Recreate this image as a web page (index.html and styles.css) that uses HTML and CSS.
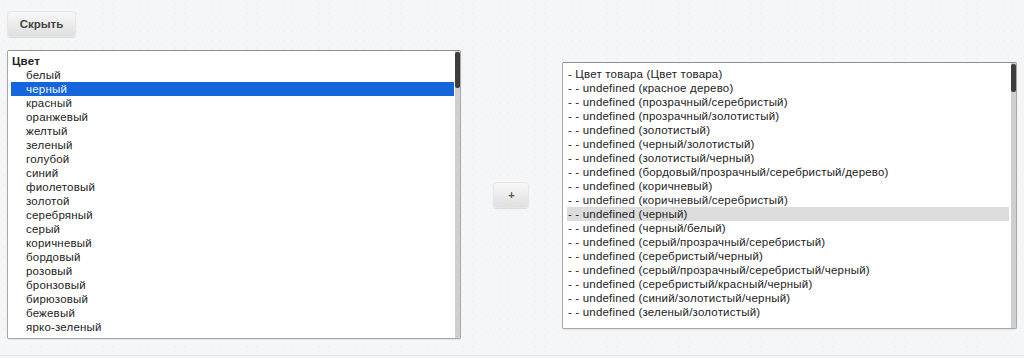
FILE: index.html
```html
<!DOCTYPE html>
<html lang="ru">
<head>
  <meta charset="UTF-8">
  <meta name="viewport" content="width=device-width, initial-scale=1.0">
  <title>Свойства товара</title>
  <link rel="stylesheet" href="styles.css">
</head>
<body>
  <div class="page">
    <div class="toolbar">
      <button class="btn btn-hide">Скрыть</button>
    </div>

    <div class="picker">
      <!-- Source list -->
      <div class="listbox listbox-source">
        <div class="options">
          <div class="opt group">Цвет</div>
          <div class="opt">белый</div>
          <div class="opt selected">черный</div>
          <div class="opt">красный</div>
          <div class="opt">оранжевый</div>
          <div class="opt">желтый</div>
          <div class="opt">зеленый</div>
          <div class="opt">голубой</div>
          <div class="opt">синий</div>
          <div class="opt">фиолетовый</div>
          <div class="opt">золотой</div>
          <div class="opt">серебряный</div>
          <div class="opt">серый</div>
          <div class="opt">коричневый</div>
          <div class="opt">бордовый</div>
          <div class="opt">розовый</div>
          <div class="opt">бронзовый</div>
          <div class="opt">бирюзовый</div>
          <div class="opt">бежевый</div>
          <div class="opt">ярко-зеленый</div>
        </div>
        <div class="scrollbar"><div class="thumb thumb-source"></div></div>
      </div>

      <div class="middle">
        <button class="btn btn-add">+</button>
      </div>

      <!-- Target list -->
      <div class="listbox listbox-target">
        <div class="options">
          <div class="opt">- Цвет товара (Цвет товара)</div>
          <div class="opt">- - undefined (красное дерево)</div>
          <div class="opt">- - undefined (прозрачный/серебристый)</div>
          <div class="opt">- - undefined (прозрачный/золотистый)</div>
          <div class="opt">- - undefined (золотистый)</div>
          <div class="opt">- - undefined (черный/золотистый)</div>
          <div class="opt">- - undefined (золотистый/черный)</div>
          <div class="opt">- - undefined (бордовый/прозрачный/серебристый/дерево)</div>
          <div class="opt">- - undefined (коричневый)</div>
          <div class="opt">- - undefined (коричневый/серебристый)</div>
          <div class="opt hover">- - undefined (черный)</div>
          <div class="opt">- - undefined (черный/белый)</div>
          <div class="opt">- - undefined (серый/прозрачный/серебристый)</div>
          <div class="opt">- - undefined (серебристый/черный)</div>
          <div class="opt">- - undefined (серый/прозрачный/серебристый/черный)</div>
          <div class="opt">- - undefined (серебристый/красный/черный)</div>
          <div class="opt">- - undefined (синий/золотистый/черный)</div>
          <div class="opt">- - undefined (зеленый/золотистый)</div>
        </div>
        <div class="scrollbar"><div class="thumb thumb-target"></div></div>
      </div>
    </div>
  </div>
</body>
</html>
```

FILE: styles.css
```css
body {
  margin: 0;
  font-family: "Liberation Sans", Arial, sans-serif;
  font-size: 11px;
  color: #222;
  background-color: #f4f6f7;
  background-image: radial-gradient(rgba(0,0,0,0.05) 0.6px, transparent 0.8px);
  background-size: 9px 9px;
}
.page {
  height: 356px;
  padding: 11px 7px 0 7px;
  box-sizing: border-box;
  border-bottom: 1px solid #e1e5e7;
}
.btn {
  border: 1px solid #e6e6e6;
  border-radius: 4px;
  background: linear-gradient(#f8f8f8, #dfdfdf);
  box-shadow: 0 1px 1px rgba(0,0,0,0.12);
  color: #444;
  font-family: "Liberation Sans", Arial, sans-serif;
  cursor: pointer;
  padding: 0;
}
.btn-hide {
  width: 69px;
  height: 26px;
  font-size: 11.5px;
  font-weight: bold;
}
.btn-add {
  width: 36px;
  height: 26px;
  font-size: 11px;
  font-weight: bold;
  color: #555;
}
.picker {
  display: flex;
  align-items: flex-start;
  margin-top: 13px;
}
.listbox {
  display: flex;
  background: #fff;
  border: 1px solid #a8a8a8;
  border-top-color: #8e8e8e;
  border-radius: 2px;
  box-shadow: 0 1px 1px rgba(0,0,0,0.08);
  box-sizing: border-box;
  overflow: hidden;
  font-size: 11.5px;
  letter-spacing: 0.2px;
}
.listbox-source {
  width: 455px;
  height: 289px;
}
.listbox-target {
  width: 456px;
  height: 267px;
  margin-top: 12px;
}
.options {
  flex: 1;
}
.listbox-source .options {
  padding: 3px 0 0 3px;
}
.listbox-target .options {
  padding: 4px 1px 0 4px;
}
.opt {
  height: 14px;
  line-height: 14px;
  white-space: nowrap;
}
.listbox-source .opt {
  padding-left: 15px;
}
.listbox-source .opt.group {
  padding-left: 1px;
  font-weight: bold;
}
.listbox-target .opt {
  padding-left: 1px;
}
.opt.selected {
  background: #1565dc;
  color: #f2f6ff;
}
.opt.hover {
  background: #dcdcdc;
}
.scrollbar {
  width: 5px;
  margin-left: 1px;
  background: #cfcfcf;
}
.thumb {
  background: #3d3d3d;
  border-radius: 2px;
  margin-top: 1px;
}
.thumb-source {
  height: 36px;
}
.thumb-target {
  height: 28px;
}
.middle {
  width: 101px;
  height: 289px;
  display: flex;
  align-items: center;
  justify-content: center;
}
```
